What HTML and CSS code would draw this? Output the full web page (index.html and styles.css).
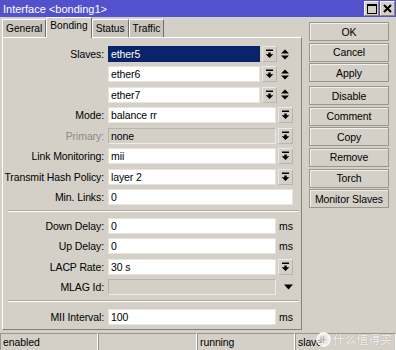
FILE: index.html
```html
<!DOCTYPE html>
<html>
<head>
<meta charset="utf-8">
<link rel="stylesheet" href="styles.css">
</head>
<body>
<div class="window">
  <div class="titlebar">
    <span class="title">Interface &lt;bonding1&gt;</span>
    <div class="winbtns">
      <span class="wbtn"><svg width="10" height="10" viewBox="0 0 10 10"><rect x="0.5" y="0.5" width="9" height="9" fill="none" stroke="#000"/><rect x="0" y="0" width="10" height="2" fill="#000"/></svg></span>
      <span class="wbtn"><svg width="9" height="9" viewBox="0 0 9 9"><path d="M1 1L8 8M8 1L1 8" stroke="#000" stroke-width="2"/></svg></span>
    </div>
  </div>
  <div class="main">
    <div class="left">
      <div class="tabs">
        <span class="tab">General</span>
        <span class="tab active">Bonding</span>
        <span class="tab">Status</span>
        <span class="tab">Traffic</span>
      </div>
      <div class="panel">
        <div class="group">
          <div class="row"><span class="lbl">Slaves:</span><span class="field w-slave sel">ether5</span><span class="ddbtn"><svg class="ddicon" width="9" height="10" viewBox="0 0 9 10"><rect x="1" y="0.5" width="7" height="1.5" fill="#000"/><path d="M3.3 3.5h2.4v1.8h2.6L4.5 9 0.7 5.3h2.6z" fill="#000"/></svg></span><span class="updown"><svg width="10" height="13" viewBox="0 0 10 13"><path d="M1 5.5h8L5 1.5z M1 7.5h8L5 11.5z" fill="#000"/></svg></span></div>
          <div class="row"><span class="lbl"></span><span class="field w-slave">ether6</span><span class="ddbtn"><svg class="ddicon" width="9" height="10" viewBox="0 0 9 10"><rect x="1" y="0.5" width="7" height="1.5" fill="#000"/><path d="M3.3 3.5h2.4v1.8h2.6L4.5 9 0.7 5.3h2.6z" fill="#000"/></svg></span><span class="updown"><svg width="10" height="13" viewBox="0 0 10 13"><path d="M1 5.5h8L5 1.5z M1 7.5h8L5 11.5z" fill="#000"/></svg></span></div>
          <div class="row"><span class="lbl"></span><span class="field w-slave">ether7</span><span class="ddbtn"><svg class="ddicon" width="9" height="10" viewBox="0 0 9 10"><rect x="1" y="0.5" width="7" height="1.5" fill="#000"/><path d="M3.3 3.5h2.4v1.8h2.6L4.5 9 0.7 5.3h2.6z" fill="#000"/></svg></span><span class="updown"><svg width="10" height="13" viewBox="0 0 10 13"><path d="M1 5.5h8L5 1.5z M1 7.5h8L5 11.5z" fill="#000"/></svg></span></div>
          <div class="row"><span class="lbl">Mode:</span><span class="field w-dd">balance rr</span><span class="ddbtn"><svg class="ddicon" width="9" height="10" viewBox="0 0 9 10"><rect x="1" y="0.5" width="7" height="1.5" fill="#000"/><path d="M3.3 3.5h2.4v1.8h2.6L4.5 9 0.7 5.3h2.6z" fill="#000"/></svg></span></div>
          <div class="row"><span class="lbl dim">Primary:</span><span class="field w-dd dis">none</span><span class="ddbtn"><svg class="ddicon" width="9" height="10" viewBox="0 0 9 10"><rect x="1" y="0.5" width="7" height="1.5" fill="#000"/><path d="M3.3 3.5h2.4v1.8h2.6L4.5 9 0.7 5.3h2.6z" fill="#000"/></svg></span></div>
          <div class="row"><span class="lbl">Link Monitoring:</span><span class="field w-dd">mii</span><span class="ddbtn"><svg class="ddicon" width="9" height="10" viewBox="0 0 9 10"><rect x="1" y="0.5" width="7" height="1.5" fill="#000"/><path d="M3.3 3.5h2.4v1.8h2.6L4.5 9 0.7 5.3h2.6z" fill="#000"/></svg></span></div>
          <div class="row"><span class="lbl">Transmit Hash Policy:</span><span class="field w-dd">layer 2</span><span class="ddbtn"><svg class="ddicon" width="9" height="10" viewBox="0 0 9 10"><rect x="1" y="0.5" width="7" height="1.5" fill="#000"/><path d="M3.3 3.5h2.4v1.8h2.6L4.5 9 0.7 5.3h2.6z" fill="#000"/></svg></span></div>
          <div class="row"><span class="lbl">Min. Links:</span><span class="field w-full">0</span></div>
        </div>
        <div class="sep"></div>
        <div class="group g2">
          <div class="row"><span class="lbl">Down Delay:</span><span class="field w-dd">0</span><span class="unit">ms</span></div>
          <div class="row"><span class="lbl">Up Delay:</span><span class="field w-dd">0</span><span class="unit">ms</span></div>
          <div class="row"><span class="lbl">LACP Rate:</span><span class="field w-dd">30 s</span><span class="ddbtn"><svg class="ddicon" width="9" height="10" viewBox="0 0 9 10"><rect x="1" y="0.5" width="7" height="1.5" fill="#000"/><path d="M3.3 3.5h2.4v1.8h2.6L4.5 9 0.7 5.3h2.6z" fill="#000"/></svg></span></div>
          <div class="row"><span class="lbl">MLAG Id:</span><span class="field w-dd dis"></span><span class="tri"><svg width="9" height="6" viewBox="0 0 9 6"><path d="M0 0.5h9L4.5 5.5z" fill="#000"/></svg></span></div>
        </div>
        <div class="sep sep2"></div>
        <div class="group">
          <div class="row"><span class="lbl">MII Interval:</span><span class="field w-dd">100</span><span class="unit">ms</span></div>
        </div>
      </div>
    </div>
    <div class="buttons">
      <span class="btn">OK</span>
      <span class="btn">Cancel</span>
      <span class="btn">Apply</span>
      <span class="btn gapped">Disable</span>
      <span class="btn">Comment</span>
      <span class="btn">Copy</span>
      <span class="btn">Remove</span>
      <span class="btn">Torch</span>
      <span class="btn">Monitor Slaves</span>
    </div>
  </div>
  <div class="status">
    <span class="cell c1">enabled</span>
    <span class="cell c2"></span>
    <span class="cell c3">running</span>
    <span class="cell c4">slave</span>
  </div>
  <div class="watermark">
    <svg width="15" height="15" viewBox="0 0 15 15"><circle cx="7.5" cy="7.5" r="6.5" fill="rgba(255,255,255,0.55)" stroke="#fff" stroke-width="1.3"/><path d="M5 4.5v6M5 7.5h5M7.5 4v7" stroke="#b8b4ac" stroke-width="1.2"/></svg>
    <span class="wmtext">什么值得买</span>
  </div>
</div>
</body>
</html>
```

FILE: styles.css
```css
* { box-sizing: border-box; }
html, body { margin: 0; padding: 0; }
body {
  background: #d4d0c8;
  font-family: "Liberation Sans", Arial, sans-serif;
  font-size: 10.5px;
  letter-spacing: -0.1px;
  color: #000;
}
.window {
  width: 396px;
  height: 350px;
  position: relative;
  overflow: hidden;
  display: flex;
  flex-direction: column;
}
.titlebar {
  height: 17px;
  flex: none;
  background: #5252cc;
  color: #fff;
  display: flex;
  align-items: center;
  justify-content: space-between;
  padding: 0 1px 0 3px;
  font-size: 11px;
  letter-spacing: 0;
}
.winbtns { display: flex; gap: 1px; }
.wbtn {
  width: 15px;
  height: 15px;
  background: #d4d0c8;
  border: 1px solid;
  border-color: #f4f2ee #8a867e #8a867e #f4f2ee;
  display: flex;
  align-items: center;
  justify-content: center;
}
.main {
  height: 315px;
  flex: none;
  display: flex;
}
.left {
  width: 302px;
  padding-left: 2px;
  display: flex;
  flex-direction: column;
}
.tabs {
  height: 20px;
  display: flex;
  align-items: flex-end;
  font-size: 10.2px;
  letter-spacing: 0;
}
.tab {
  height: 18px;
  padding: 0 3px;
  border: 1px solid;
  border-color: #fff #707070 transparent #fff;
  border-bottom: none;
  line-height: 17px;
  background: #c9c5bd;
}
.tab.active {
  height: 21px;
  margin-bottom: -1px;
  padding: 0 3px;
  line-height: 16px;
  position: relative;
  z-index: 1;
  background: #d4d0c8;
}
.panel {
  height: 293px;
  border: 1px solid;
  border-color: #fff #808080 #808080 #fff;
  padding-top: 8px;
}
.group {
  display: flex;
  flex-direction: column;
  gap: 4.43px;
}
.group.g2 { gap: 4.5px; }
.row {
  height: 16px;
  display: flex;
  align-items: center;
}
.lbl {
  width: 101px;
  margin-right: 4px;
  text-align: right;
  white-space: nowrap;
}
.lbl.dim { color: #8d8983; }
.field {
  height: 16px;
  background: #fff;
  border: 1px solid #e6e4df;
  padding-left: 2px;
  line-height: 14px;
  white-space: nowrap;
}
.field.sel { background: #0a246a; color: #fff; border-color: #0a246a; }
.field.dis {
  background: #d4d0c8;
  border-color: #b9b5ad #eeece8 #eeece8 #b9b5ad;
}
.w-slave { width: 152px; }
.w-dd { width: 168px; }
.w-full { width: 185px; }
.ddbtn {
  width: 15px;
  height: 16px;
  margin-left: 2px;
  border: 1px solid;
  border-color: #eceae5 #b9b5ad #b9b5ad #eceae5;
  display: flex;
  align-items: center;
  justify-content: center;
}
.updown {
  width: 10px;
  height: 13px;
  margin-left: 3px;
  display: flex;
}
.unit { margin-left: 3px; }
.tri {
  margin-left: 8px;
  display: flex;
  align-items: center;
}
.sep {
  margin: 5px 0 6px 5px;
  width: 290px;
  height: 2px;
  border-top: 1px solid #a9a59d;
  border-bottom: 1px solid #fff;
}
.sep.sep2 { margin-bottom: 6.5px; }
.buttons {
  margin-left: 7px;
  padding-top: 5px;
  width: 80px;
  display: flex;
  flex-direction: column;
  gap: 1.6px;
}
.btn {
  height: 19px;
  border: 1px solid #9a968e;
  box-shadow: inset 1px 1px 0 #f2f0ec;
  display: flex;
  align-items: center;
  justify-content: center;
  white-space: nowrap;
}
.btn.gapped { margin-top: 2.4px; }
.status {
  margin-top: 1px;
  height: 18px;
  display: flex;
}
.cell {
  height: 18px;
  border: 1px solid;
  border-color: #9a968e #fff #fff #9a968e;
  padding-left: 2px;
  line-height: 16px;
}
.c1 { width: 98px; }
.c2 { width: 99px; }
.c3 { width: 98px; }
.c4 { width: 101px; }
.watermark {
  position: absolute;
  right: 4px;
  bottom: 3px;
  display: flex;
  align-items: center;
  gap: 2px;
}
.wmtext {
  font-family: "Noto Sans CJK SC", sans-serif;
  font-size: 11.5px;
  color: rgba(255, 255, 255, 0.9);
  text-shadow: 0 0 1px #9a968e;
  letter-spacing: 0.3px;
}
```
